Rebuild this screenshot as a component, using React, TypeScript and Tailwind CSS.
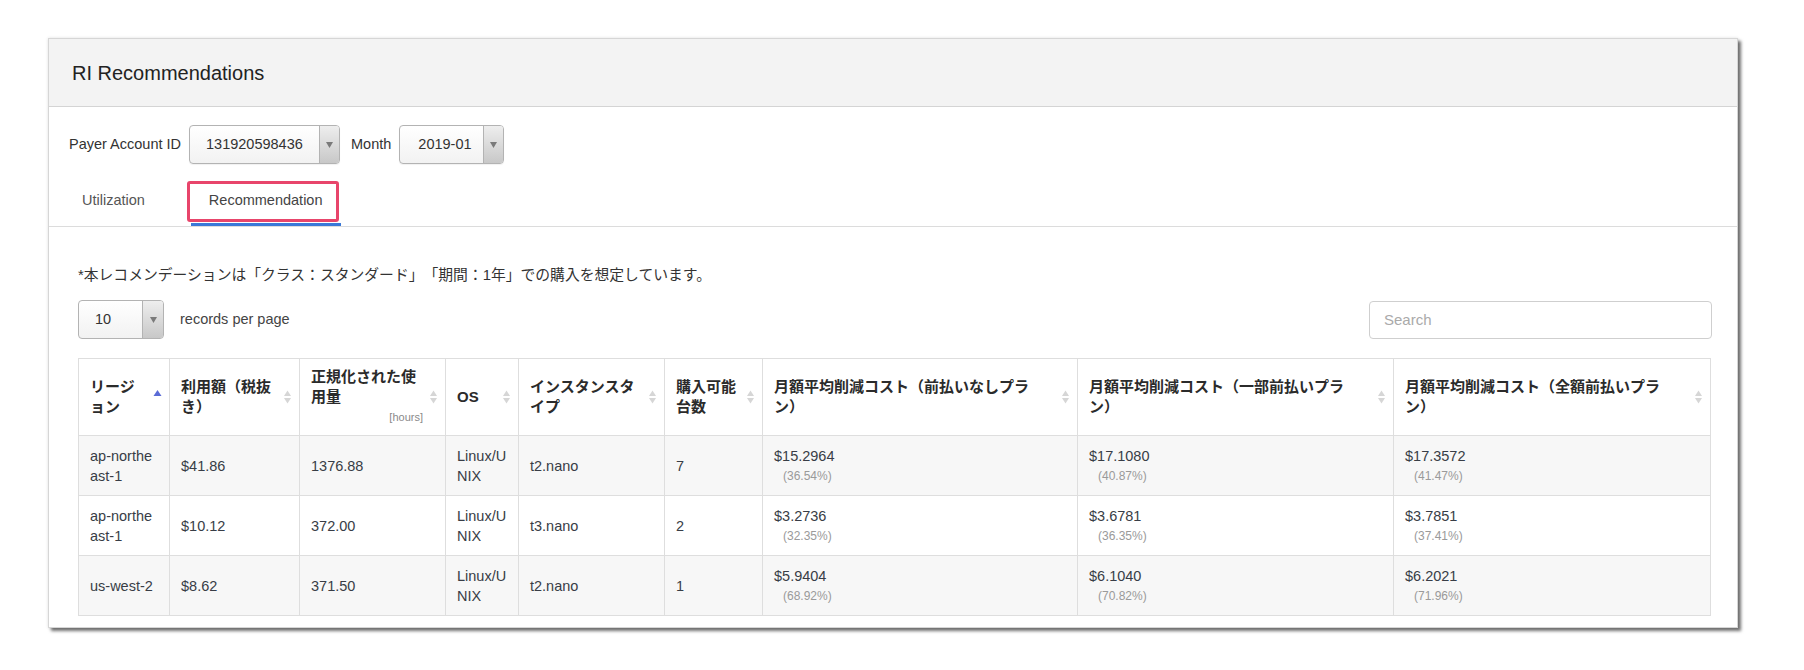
import React from 'react';

const font = "font-['Liberation_Sans','Noto_Sans_CJK_JP',sans-serif]";

function Caret() {
  return (
    <svg width="7" height="6" viewBox="0 0 7 6">
      <polygon points="0,0 7,0 3.5,6" fill="#7a7a7a" />
    </svg>
  );
}

function Select({ value, width, textPad }: { value: string; width: string; textPad: string }) {
  return (
    <div className={`flex h-[39px] ${width} rounded-[4px] border border-[#b3b3b3] bg-linear-to-b from-white to-[#f2f2f2] shadow-[0_1px_1px_rgba(0,0,0,0.06)] overflow-hidden`}>
      <div className={`flex flex-1 items-center ${textPad} text-[14.5px] text-[#333]`}>{value}</div>
      <div className="flex w-[20px] items-center justify-center border-l border-[#b3b3b3] bg-linear-to-b from-[#eeeeee] to-[#c8c8c8]">
        <Caret />
      </div>
    </div>
  );
}

function SortIcon({ active }: { active?: boolean }) {
  if (active) {
    return (
      <svg width="9" height="16" viewBox="0 0 9 16" className="shrink-0">
        <polygon points="0.5,7 4.5,1 8.5,7" fill="#5a6bd6" />
      </svg>
    );
  }
  return (
    <svg width="9" height="16" viewBox="0 0 9 16" className="shrink-0">
      <polygon points="1,7 4.5,1.5 8,7" fill="#d6d6d6" />
      <polygon points="1,9 4.5,14.5 8,9" fill="#d6d6d6" />
    </svg>
  );
}

const colWidths = ['w-[91px]', 'w-[130px]', 'w-[146px]', 'w-[73px]', 'w-[146px]', 'w-[98px]', 'w-[315px]', 'w-[316px]', 'w-[317px]'];

const headers: { lines: string[]; unit?: string; active?: boolean }[] = [
  { lines: ['リージ', 'ョン'], active: true },
  { lines: ['利用額（税抜', 'き）'] },
  { lines: ['正規化された使', '用量'], unit: '[hours]' },
  { lines: ['OS'] },
  { lines: ['インスタンスタ', 'イプ'] },
  { lines: ['購入可能', '台数'] },
  { lines: ['月額平均削減コスト（前払いなしプラ', 'ン）'] },
  { lines: ['月額平均削減コスト（一部前払いプラ', 'ン）'] },
  { lines: ['月額平均削減コスト（全額前払いプラ', 'ン）'] },
];

const rows = [
  { region: ['ap-northe', 'ast-1'], cost: '$41.86', usage: '1376.88', type: 't2.nano', count: '7', a: ['$15.2964', '(36.54%)'], b: ['$17.1080', '(40.87%)'], c: ['$17.3572', '(41.47%)'] },
  { region: ['ap-northe', 'ast-1'], cost: '$10.12', usage: '372.00', type: 't3.nano', count: '2', a: ['$3.2736', '(32.35%)'], b: ['$3.6781', '(36.35%)'], c: ['$3.7851', '(37.41%)'] },
  { region: ['us-west-2'], cost: '$8.62', usage: '371.50', type: 't2.nano', count: '1', a: ['$5.9404', '(68.92%)'], b: ['$6.1040', '(70.82%)'], c: ['$6.2021', '(71.96%)'] },
];

function Lines({ lines }: { lines: string[] }) {
  return (
    <>
      {lines.map((l, i) => (
        <div key={i}>{l}</div>
      ))}
    </>
  );
}

function Saving({ v }: { v: string[] }) {
  return (
    <>
      <div>{v[0]}</div>
      <div className="pl-[9px] text-[12px] text-[#9a9a9a]">{v[1]}</div>
    </>
  );
}

export default function App() {
  const td = 'h-[60px] border border-[#dedede] px-[11px] align-middle text-[14.5px] leading-[20px] text-[#383d46]';
  return (
    <div className={`${font} min-h-screen bg-white pt-[38px] pl-[48px]`}>
      <div className="w-[1690px] border border-[#d6d6d6] bg-white shadow-[3px_3px_3px_rgba(0,0,0,0.55),0_0_3px_rgba(0,0,0,0.12)]">
        <div className="flex h-[68px] items-center border-b border-[#d4d4d4] bg-[#f3f3f3] pl-[23px]">
          <h1 className="text-[20px] text-[#222]">RI Recommendations</h1>
        </div>

        <div className="flex items-center pl-[20px] pt-[18px]">
          <span className="mr-[8px] text-[14.5px] text-[#333]">Payer Account ID</span>
          <Select value="131920598436" width="w-[151px]" textPad="pl-[16px]" />
          <span className="ml-[11px] mr-[8px] text-[14.5px] text-[#333]">Month</span>
          <Select value="2019-01" width="w-[105px]" textPad="pl-[18px]" />
        </div>

        <div className="mt-[17px] flex border-b border-[#dcdcdc] pl-[15px]">
          <div className="flex h-[45px] items-center border-b-[3px] border-transparent px-[18px] pb-[2px] text-[14.5px] text-[#555]">
            Utilization
          </div>
          <div className="relative ml-[28px] flex h-[45px] items-center border-b-[3px] border-[#3a78d8] px-[18px] pb-[2px] text-[14.5px] text-[#444]">
            Recommendation
            <div className="absolute -left-[4px] top-0 h-[41px] w-[152px] rounded-[3px] border-[3px] border-[#e8456b]" />
          </div>
        </div>

        <div className="pl-[29px] pr-[25px] pt-[37px] pb-[11px]">
          <p className="text-[14.8px] leading-[22px] text-[#333] [text-spacing-trim:space-all]">*本レコメンデーションは「クラス：スタンダード」「期間：1年」での購入を想定しています。</p>

          <div className="mt-[14px] flex w-[1634px] items-center justify-between">
            <div className="flex items-center">
              <div className="flex h-[39px] w-[86px] overflow-hidden rounded-[4px] border border-[#b3b3b3] bg-linear-to-b from-white to-[#f2f2f2]">
                <div className="flex flex-1 items-center pl-[16px] text-[14.5px] text-[#333]">10</div>
                <div className="flex w-[21px] items-center justify-center border-l border-[#b3b3b3] bg-linear-to-b from-[#eeeeee] to-[#c8c8c8]">
                  <Caret />
                </div>
              </div>
              <span className="ml-[16px] text-[14.5px] text-[#444]">records per page</span>
            </div>
            <input
              placeholder="Search"
              className="h-[38px] w-[343px] rounded-[4px] border border-[#cfcfcf] bg-white pl-[14px] text-[15px] text-[#333] outline-none placeholder:text-[#aaaaaa]"
            />
          </div>

          <table className="mt-[19px] w-[1632px] table-fixed border-collapse">
            <colgroup>
              {colWidths.map((w, i) => (
                <col key={i} className={w} />
              ))}
            </colgroup>
            <thead>
              <tr>
                {headers.map((h, i) => (
                  <th
                    key={i}
                    className="h-[77px] border border-[#dedede] bg-white pl-[11px] pr-[7px] text-left align-middle text-[15px] font-bold leading-[20px] text-[#2b2b2b]"
                  >
                    <div className="flex items-center gap-[6px]">
                      <div className="flex-1">
                        <Lines lines={h.lines} />
                        {h.unit && <div className="text-right text-[11px] font-normal text-[#8a8a8a]">{h.unit}</div>}
                      </div>
                      <SortIcon active={h.active} />
                    </div>
                  </th>
                ))}
              </tr>
            </thead>
            <tbody>
              {rows.map((r, i) => (
                <tr key={i} className={i % 2 === 0 ? 'bg-[#f7f7f7]' : 'bg-white'}>
                  <td className={td}><Lines lines={r.region} /></td>
                  <td className={td}>{r.cost}</td>
                  <td className={td}>{r.usage}</td>
                  <td className={td}><Lines lines={['Linux/U', 'NIX']} /></td>
                  <td className={td}>{r.type}</td>
                  <td className={td}>{r.count}</td>
                  <td className={td}><Saving v={r.a} /></td>
                  <td className={td}><Saving v={r.b} /></td>
                  <td className={td}><Saving v={r.c} /></td>
                </tr>
              ))}
            </tbody>
          </table>
        </div>
      </div>
    </div>
  );
}
